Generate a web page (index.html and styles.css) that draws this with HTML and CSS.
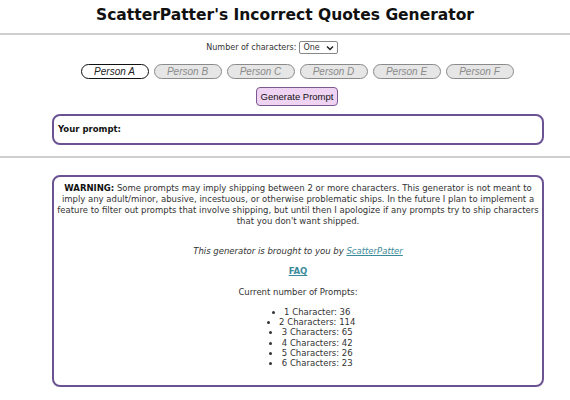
FILE: index.html
```html
<!DOCTYPE html>
<html>
<head>
<meta charset="utf-8">
<link rel="stylesheet" href="styles.css">
</head>
<body>
<h1 class="title">ScatterPatter's Incorrect Quotes Generator</h1>
<hr class="rule">
<div class="controls">
  <div class="count-row">
    <label>Number of characters:</label>
    <span class="select">One <svg width="8" height="6" viewBox="0 0 8 6"><path d="M1 1.5 L4 4.5 L7 1.5" fill="none" stroke="#222" stroke-width="1.5"/></svg></span>
  </div>
  <div class="people">
    <span class="person active">Person A</span>
    <span class="person">Person B</span>
    <span class="person">Person C</span>
    <span class="person">Person D</span>
    <span class="person">Person E</span>
    <span class="person">Person F</span>
  </div>
  <div class="gen-row"><span class="gen">Generate Prompt</span></div>
</div>
<div class="prompt-box"><b>Your prompt:</b></div>
<hr class="rule rule2">
<div class="info-box">
  <p class="warning"><b>WARNING:</b> Some prompts may imply shipping between 2 or more characters. This generator is not meant to imply any adult/minor, abusive, incestuous, or otherwise problematic ships. In the future I plan to implement a feature to filter out prompts that involve shipping, but until then I apologize if any prompts try to ship characters that you don't want shipped.</p>
  <p class="credit">This generator is brought to you by <a href="#">ScatterPatter</a></p>
  <p class="faq"><a href="#">FAQ</a></p>
  <p class="count-title">Current number of Prompts:</p>
  <ul class="counts">
    <li>1 Character: 36</li>
    <li>2 Characters: 114</li>
    <li>3 Characters: 65</li>
    <li>4 Characters: 42</li>
    <li>5 Characters: 26</li>
    <li>6 Characters: 23</li>
  </ul>
</div>
</body>
</html>
```
FILE: styles.css
```css
body {
  margin: 0;
  font-family: "DejaVu Sans", Verdana, sans-serif;
  font-size: 9px;
  color: #222;
  background: #fff;
}
.title {
  margin: 0;
  padding-top: 4px;
  text-align: center;
  font-size: 15.5px;
  font-weight: bold;
  color: #111;
  line-height: 22px;
}
.rule {
  margin: 7px 0 0;
  border: 0;
  border-top: 2px solid #cfcfcf;
}
.controls {
  text-align: center;
}
.count-row {
  margin-top: 6px;
  padding-right: 26px;
  display: flex;
  justify-content: center;
  align-items: center;
  gap: 3px;
  color: #333;
  font-size: 8px;
}
.select {
  display: inline-flex;
  align-items: center;
  gap: 6px;
  border: 1px solid #888;
  border-radius: 2px;
  padding: 0 3px;
  height: 11px;
  font-size: 8px;
}
.people {
  margin-top: 10px;
  padding-left: 24px;
  display: flex;
  justify-content: center;
  gap: 5px;
}
.person {
  width: 66px;
  height: 13px;
  line-height: 13px;
  border: 1px solid #8a8a8a;
  border-radius: 8px;
  background: #e6e6e6;
  color: #8a8a8a;
  font-family: "Liberation Sans", Arial, sans-serif;
  font-style: italic;
  font-size: 10px;
}
.person.active {
  background: #fff;
  border: 1.5px solid #111;
  color: #222;
}
.gen-row {
  margin-top: 8px;
  padding-left: 24px;
  display: flex;
  justify-content: center;
}
.gen {
  padding: 0 4px;
  height: 17px;
  line-height: 17px;
  border: 1.5px solid #7a5a8e;
  border-radius: 4px;
  background: #efd3f3;
  font-family: "Liberation Sans", Arial, sans-serif;
  font-size: 9.5px;
  color: #111;
}
.prompt-box {
  margin: 8px 26px 0 52px;
  height: 27px;
  line-height: 27px;
  border: 2px solid #6b5393;
  border-radius: 8px;
  padding-left: 4px;
  font-size: 8.5px;
  color: #111;
}
.rule2 {
  margin-top: 11px;
}
.info-box {
  margin: 17px 26px 0 52px;
  height: 202px;
  border: 2px solid #6b5393;
  border-radius: 8px;
  text-align: center;
  padding: 6px 3px 0;
  font-size: 8.5px;
  line-height: 11px;
  color: #333;
}
.info-box p {
  margin: 0;
}
.warning b {
  color: #111;
}
.credit {
  margin-top: 19px !important;
  font-style: italic;
}
.credit a, .faq a {
  color: #3a8a99;
}
.faq {
  margin-top: 9px !important;
  font-weight: bold;
}
.count-title {
  margin-top: 10px !important;
}
.counts {
  margin: 9px 0 0;
  padding: 0 0 0 26px;
  list-style: disc inside;
}
.counts li {
  line-height: 10.2px;
}
```
